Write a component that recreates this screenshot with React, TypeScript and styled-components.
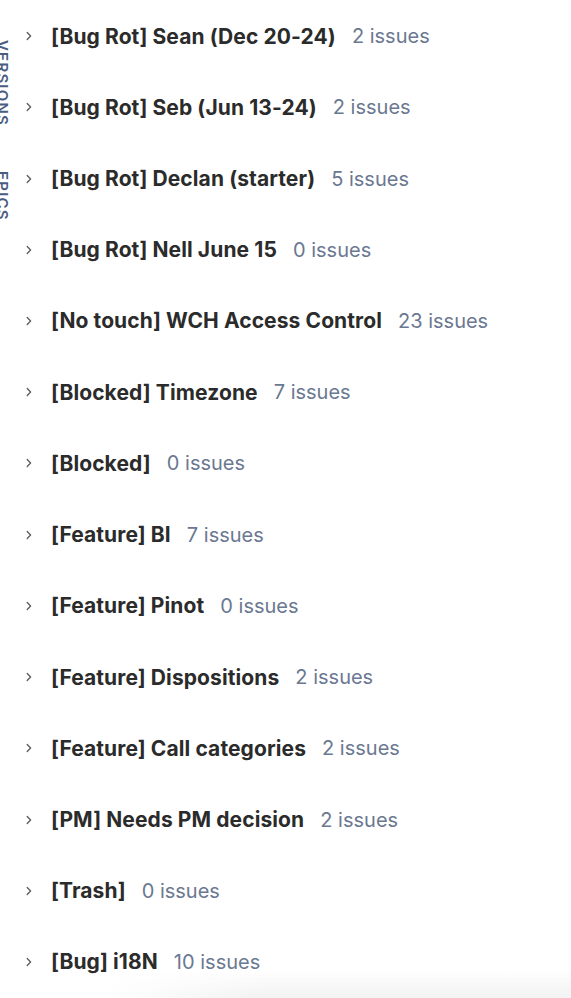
import React from 'react';
import styled, { createGlobalStyle } from 'styled-components';

const versions = [
  { name: '[Bug Rot] Sean (Dec 20-24)', count: 2 },
  { name: '[Bug Rot] Seb (Jun 13-24)', count: 2 },
  { name: '[Bug Rot] Declan (starter)', count: 5 },
  { name: '[Bug Rot] Nell June 15', count: 0 },
  { name: '[No touch] WCH Access Control', count: 23 },
  { name: '[Blocked] Timezone', count: 7 },
  { name: '[Blocked]', count: 0 },
  { name: '[Feature] BI', count: 7 },
  { name: '[Feature] Pinot', count: 0 },
  { name: '[Feature] Dispositions', count: 2 },
  { name: '[Feature] Call categories', count: 2 },
  { name: '[PM] Needs PM decision', count: 2 },
  { name: '[Trash]', count: 0 },
  { name: '[Bug] i18N', count: 10 },
];

const GlobalStyle = createGlobalStyle`
  html, body {
    margin: 0;
    padding: 0;
    background: #fff;
    font-family: Inter, "Noto Sans", sans-serif;
    -webkit-font-smoothing: antialiased;
  }
`;

const Chevron = () => (
  <svg width="12" height="12" viewBox="0 0 12 12" fill="none">
    <path d="M4.2 2.5L7.6 6L4.2 9.5" stroke="#5c5c5c" strokeWidth="1.3" strokeLinecap="round" strokeLinejoin="round" />
  </svg>
);

const App = () => (
  <>
    <GlobalStyle />
    <Page>
      <SideTabs>
        <SideTab $length={90}>Versions</SideTab>
        <SideTab $length={56}>Epics</SideTab>
      </SideTabs>
      <List>
        {versions.map((v) => (
          <Row key={v.name}>
            <Chevron />
            <Name>{v.name}</Name>
            <Count>{v.count} issues</Count>
          </Row>
        ))}
      </List>
      <BottomFade />
    </Page>
  </>
);

const Page = styled.div`
  position: relative;
  display: flex;
  width: 571px;
  height: 998px;
  overflow: hidden;
`;

const SideTabs = styled.div`
  display: flex;
  flex-direction: column;
  gap: 41px;
  width: 14px;
  margin-left: -5px;
  padding-top: 40px;
  flex-shrink: 0;
`;

const SideTab = styled.div<{ $length: number }>`
  writing-mode: vertical-rl;
  width: 14px;
  height: ${(p) => p.$length}px;
  font-size: 15px;
  font-weight: 600;
  letter-spacing: 1.2px;
  text-transform: uppercase;
  color: #4a5d80;
  line-height: 14px;
`;

const List = styled.div`
  display: flex;
  flex-direction: column;
  padding-top: 0.5px;
  padding-left: 14px;
`;

const Row = styled.div`
  display: flex;
  align-items: center;
  height: 71.23px;
  white-space: nowrap;

  svg {
    flex-shrink: 0;
    margin-right: 16px;
  }
`;

const Name = styled.span`
  font-size: 21px;
  font-weight: 700;
  letter-spacing: 0.1px;
  color: #2b2b2b;
  margin-right: 16px;
`;

const Count = styled.span`
  font-size: 20px;
  font-weight: 400;
  color: #6b7891;
`;

const BottomFade = styled.div`
  position: absolute;
  left: 0;
  right: 0;
  bottom: 0;
  height: 28px;
  background: linear-gradient(to bottom, rgba(244, 244, 244, 0), rgba(240, 240, 240, 0.85));
  -webkit-mask-image: linear-gradient(to right, transparent 100px, #000 260px);
  mask-image: linear-gradient(to right, transparent 100px, #000 260px);
  pointer-events: none;
`;

export default App;
